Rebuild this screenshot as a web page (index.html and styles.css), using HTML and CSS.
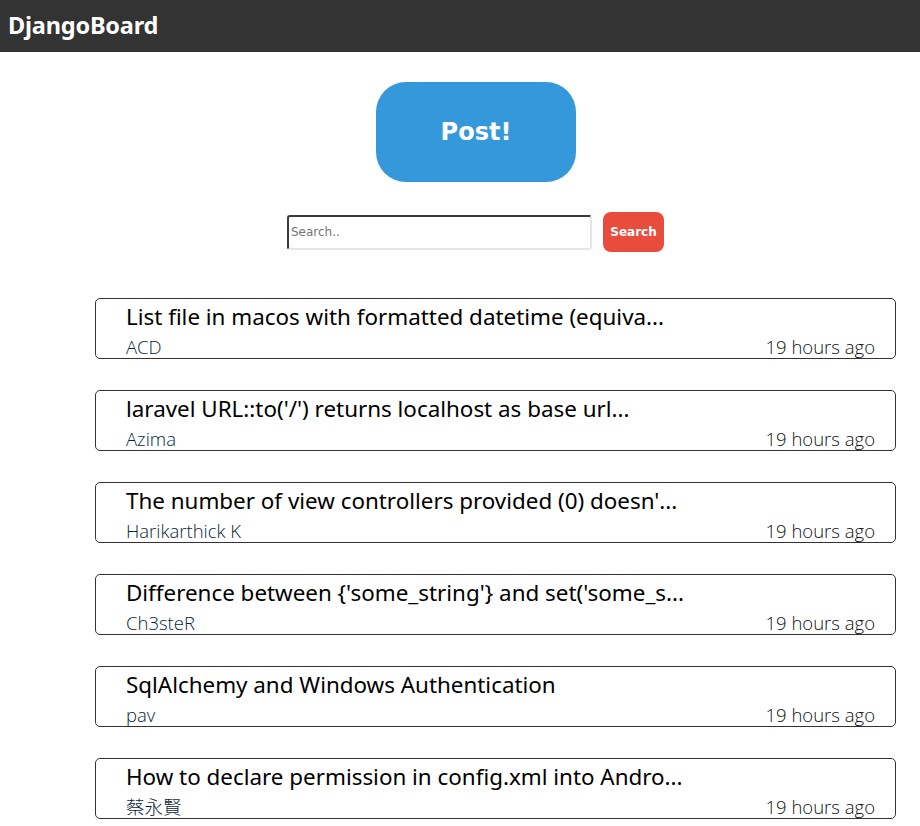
FILE: index.html
```html
<!DOCTYPE html>
<html>
<head>
<meta charset="utf-8">
<link rel="stylesheet" href="styles.css">
</head>
<body>
<header class="topbar"><span class="brand">DjangoBoard</span></header>
<main class="page">
  <div class="post-wrap"><button class="post-btn">Post!</button></div>
  <form class="search">
    <input class="search-input" type="text" placeholder="Search..">
    <button class="search-btn" type="button">Search</button>
  </form>
  <ul class="list">
    <li class="card"><div class="title">List file in macos with formatted datetime (equiva...</div><div class="meta"><span class="author">ACD</span><span class="time">19 hours ago</span></div></li>
    <li class="card"><div class="title">laravel URL::to('/') returns localhost as base url...</div><div class="meta"><span class="author">Azima</span><span class="time">19 hours ago</span></div></li>
    <li class="card"><div class="title">The number of view controllers provided (0) doesn'...</div><div class="meta"><span class="author">Harikarthick K</span><span class="time">19 hours ago</span></div></li>
    <li class="card"><div class="title">Difference between {'some_string'} and set('some_s...</div><div class="meta"><span class="author">Ch3steR</span><span class="time">19 hours ago</span></div></li>
    <li class="card"><div class="title">SqlAlchemy and Windows Authentication</div><div class="meta"><span class="author">pav</span><span class="time">19 hours ago</span></div></li>
    <li class="card"><div class="title">How to declare permission in config.xml into Andro...</div><div class="meta"><span class="author">蔡永賢</span><span class="time">19 hours ago</span></div></li>
  </ul>
</main>
</body>
</html>
```
FILE: styles.css
```css
html, body { margin: 0; padding: 0; background: #fff; }
body { font-family: "Noto Sans", "Noto Sans CJK TC", sans-serif; color: #000; }
.topbar { height: 52px; background: #333; display: flex; align-items: center; padding-left: 8px; }
.brand { color: #fff; font-weight: 700; font-size: 23.5px; font-family: "Noto Sans", sans-serif; letter-spacing: -0.2px; margin-top: -3px; }
.page { padding-top: 30px; }
.post-wrap { display: flex; justify-content: center; }
.post-btn { width: 200px; height: 100px; border: none; border-radius: 30px; background: #3498db; color: #fff; font-family: "DejaVu Sans", sans-serif; font-weight: 700; font-size: 24px; margin-left: 32px; }
.search { display: flex; justify-content: center; align-items: center; gap: 11px; margin-top: 30px; padding-left: 31px; }
.search-input { width: 305px; height: 35px; box-sizing: border-box; border: 2px inset #e6e6e6; border-top-color: #8f8f8f; border-left-color: #8f8f8f; border-radius: 3px; padding: 1px 2px; font-family: "DejaVu Sans", sans-serif; font-size: 12px; }
.search-input::placeholder { color: #757575; }
.search-btn { width: 61px; height: 40px; border: none; border-radius: 8px; background: #e74c3c; color: #fff; font-family: "DejaVu Sans", sans-serif; font-weight: 700; font-size: 12px; padding: 0; }
.list { list-style: none; margin: 46px 0 0 95px; padding: 0; width: 801px; display: flex; flex-direction: column; gap: 31px; }
.card { box-sizing: border-box; height: 61px; border: 1px solid #333; border-radius: 5px; padding: 2px 20px 0 30px; overflow: hidden; }
.title { font-size: 22.4px; line-height: 32px; white-space: nowrap; }
.meta { display: flex; justify-content: space-between; font-family: "Open Sans", "Noto Sans CJK TC", sans-serif; font-size: 18.5px; font-weight: 300; line-height: 28px; color: #0b1f3a; }
.time { color: #111; }
```
